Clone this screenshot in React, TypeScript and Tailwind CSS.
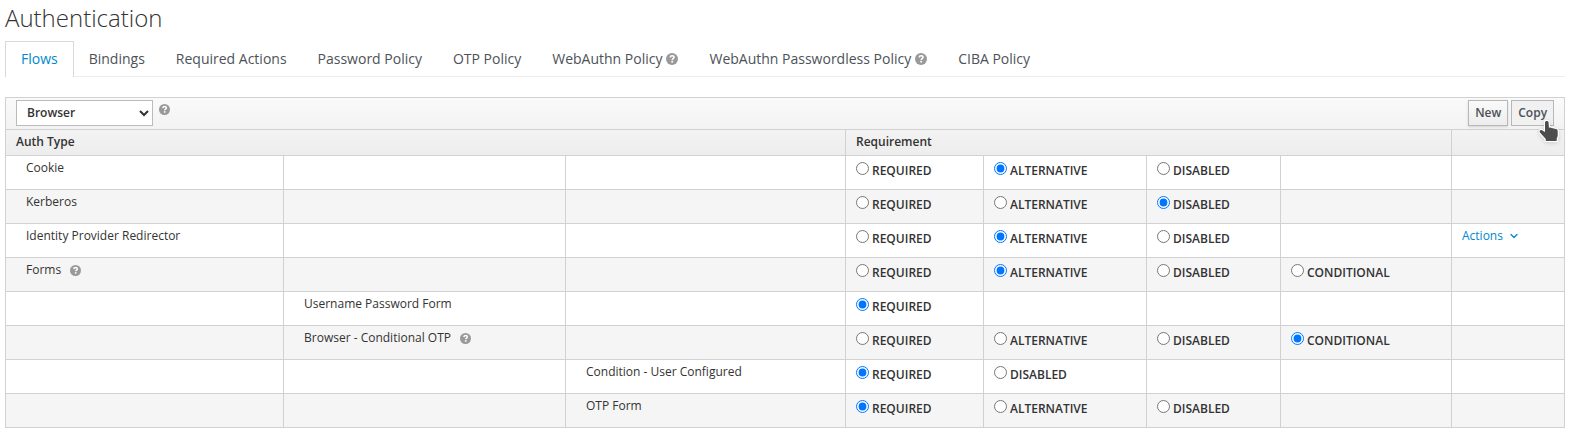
import { ChevronDown } from "lucide-react";

type Option = "REQUIRED" | "ALTERNATIVE" | "DISABLED" | "CONDITIONAL";

interface Execution {
  name: string;
  level: number;
  options: Option[];
  selected: Option;
  help?: boolean;
  actions?: boolean;
}

const RAD: Option[] = ["REQUIRED", "ALTERNATIVE", "DISABLED"];

const executions: Execution[] = [
  { name: "Cookie", level: 0, options: RAD, selected: "ALTERNATIVE" },
  { name: "Kerberos", level: 0, options: RAD, selected: "DISABLED" },
  { name: "Identity Provider Redirector", level: 0, options: RAD, selected: "ALTERNATIVE", actions: true },
  { name: "Forms", level: 0, options: [...RAD, "CONDITIONAL"], selected: "ALTERNATIVE", help: true },
  { name: "Username Password Form", level: 1, options: ["REQUIRED"], selected: "REQUIRED" },
  { name: "Browser - Conditional OTP", level: 1, options: [...RAD, "CONDITIONAL"], selected: "CONDITIONAL", help: true },
  { name: "Condition - User Configured", level: 2, options: ["REQUIRED", "DISABLED"], selected: "REQUIRED" },
  { name: "OTP Form", level: 2, options: RAD, selected: "REQUIRED" },
];

const tabs = [
  { label: "Flows", active: true },
  { label: "Bindings" },
  { label: "Required Actions" },
  { label: "Password Policy" },
  { label: "OTP Policy" },
  { label: "WebAuthn Policy", help: true },
  { label: "WebAuthn Passwordless Policy", help: true },
  { label: "CIBA Policy" },
];

function HelpIcon({ className }: { className: string }) {
  return (
    <svg aria-hidden="true" viewBox="0 0 12 12" className={className}>
      <circle cx="6" cy="6" r="6" fill="#999" />
      <path
        d="M4.2 4.5C4.3 3.3 5 2.8 6.1 2.8c1.1 0 1.9.6 1.9 1.5 0 1.2-1.8 1.3-1.8 2.6"
        fill="none"
        stroke="#fff"
        strokeWidth="1.6"
      />
      <rect x="5.3" y="7.8" width="1.8" height="1.7" fill="#fff" />
    </svg>
  );
}

function HandCursor() {
  return (
    <svg
      aria-hidden="true"
      viewBox="0 0 20 22"
      className="pointer-events-none absolute top-5 left-7 h-[22px] w-5 drop-shadow-sm"
    >
      <path
        d="M6 2.6c0-2 3.6-2 3.6 0l.3 4.9 2.3.2 2.4.8 2.4.6c1.200.3 1.700 1 1.700 2.200v4.700l-1 2.500v2.400H6.800v-1.900L.9 12.500c-.9-1.700.4-3 2-2.300L6 12z"
        fill="#4d4d4d"
        stroke="#fff"
        strokeWidth="2.4"
        strokeLinejoin="round"
        paintOrder="stroke"
      />
    </svg>
  );
}

const cell = "border border-[#d1d1d1]";

export default function App() {
  return (
    <main className="bg-white px-[5px] pt-[3px] pb-1.5 font-['Open_Sans',sans-serif] text-xs text-[#333]">
      <h1 className="text-2xl leading-[30px] font-light">Authentication</h1>
      <nav className="mt-2 flex border-b border-[#ededed] text-sm">
        {tabs.map((t) => (
          <a
            key={t.label}
            href="#"
            className={
              t.active
                ? "-mb-px flex h-9 items-center border border-b-0 border-[#d9d9d9] bg-white px-[15px] pb-0.5 text-[#0088ce]"
                : "-ml-px flex h-[35px] items-center gap-1 border-x border-transparent px-[15px] text-[#4d5258]"
            }
          >
            {t.label}
            {t.help && <HelpIcon className="size-3" />}
          </a>
        ))}
      </nav>
      <table className="mt-5 w-full table-fixed border-collapse">
        <colgroup>
          <col className="w-[278px]" />
          <col className="w-[282px]" />
          <col className="w-[280px]" />
          <col className="w-[138px]" />
          <col className="w-[163px]" />
          <col className="w-[134px]" />
          <col className="w-[171px]" />
          <col className="w-[113px]" />
        </colgroup>
        <thead className="bg-linear-to-b from-[#fafafa] to-[#ededed] text-left">
          <tr className="h-8">
            <th colSpan={8} className={`${cell} px-2.5 pb-0.5 font-semibold`}>
              <div className="flex items-center justify-between">
                <div className="flex items-start gap-1.5">
                  <select
                    aria-label="Flow"
                    className="block h-[26px] w-[137px] border border-[#bbb] bg-white pl-1.5 font-semibold text-[#333]"
                  >
                    <option>Browser</option>
                  </select>
                  <HelpIcon className="mt-1 size-[11px]" />
                </div>
                <div className="flex gap-[3px]">
                  <button className="h-[26px] border border-[#b7b7b7] bg-linear-to-b from-[#fafafa] to-[#ededed] px-1.5 font-semibold text-[#4d5258] shadow-sm">
                    New
                  </button>
                  <div className="relative">
                    <button className="h-[26px] border border-[#b7b7b7] bg-[#f1f1f1] px-1.5 font-semibold text-[#4d5258]">
                      Copy
                    </button>
                    <HandCursor />
                  </div>
                </div>
              </div>
            </th>
          </tr>
          <tr className="h-[26px]">
            <th colSpan={3} className={`${cell} px-2.5 pb-0.5 font-semibold`}>Auth Type</th>
            <th colSpan={4} className={`${cell} px-2.5 pb-0.5 font-semibold`}>Requirement</th>
            <th className={cell} />
          </tr>
        </thead>
        <tbody>
          {executions.map((e) => (
            <tr key={e.name} className="h-[34px] align-top even:bg-[#f5f5f5]">
              {[0, 1, 2].map((level) => (
                <td key={level} className={`${cell} pt-1 pl-5`}>
                  {level === e.level && (
                    <span className="flex items-center gap-[9px] leading-4">
                      {e.name}
                      {e.help && <HelpIcon className="size-[11px]" />}
                    </span>
                  )}
                </td>
              ))}
              {[0, 1, 2, 3].map((i) => (
                <td key={i} className={`${cell} pt-1.5 pl-2.5`}>
                  {e.options[i] && (
                    <label className="flex items-start gap-[3px] font-semibold">
                      <input
                        type="radio"
                        name={e.name}
                        defaultChecked={e.options[i] === e.selected}
                        className="size-[13px]"
                      />
                      <span className="leading-[18px]">{e.options[i]}</span>
                    </label>
                  )}
                </td>
              ))}
              <td className={`${cell} pt-1 pl-2.5`}>
                {e.actions && (
                  <button className="flex items-center gap-[5px] leading-4 text-[#0088ce]">
                    Actions
                    <ChevronDown className="size-3" strokeWidth={2.5} />
                  </button>
                )}
              </td>
            </tr>
          ))}
        </tbody>
      </table>
    </main>
  );
}
